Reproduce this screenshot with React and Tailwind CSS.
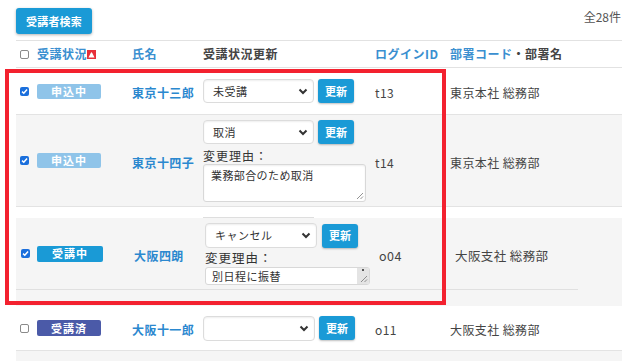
import React from "react";

const Check = ({ checked }) =>
  checked ? (
    <span className="flex h-[9px] w-[9px] items-center justify-center rounded-[2px] bg-[#1b6fdc]">
      <svg width="7" height="7" viewBox="0 0 8 8">
        <path d="M1.2 4.1 L3.2 6 L6.9 1.7" stroke="white" strokeWidth="1.7" fill="none" />
      </svg>
    </span>
  ) : (
    <span className="block h-[9px] w-[9px] rounded-[2px] border border-[#8a8a8a] bg-white" />
  );

const Chevron = () => (
  <svg width="10" height="7" viewBox="0 0 10 7">
    <path d="M1.5 1.5 L5 5 L8.5 1.5" stroke="#333" strokeWidth="2" fill="none" />
  </svg>
);

const Select = ({ value, wide }) => (
  <div
    className={
      "flex items-center justify-between rounded-[4px] border border-[#dcdcdc] bg-white pl-[9px] pr-[5px] shadow-[inset_0_1px_2px_rgba(0,0,0,0.07)] " +
      (wide ? "h-[25px] w-[112px]" : "h-[24px] w-[111px]")
    }
  >
    <span className="text-[11px] leading-none tracking-[0.5px] text-[#333]">{value}</span>
    <Chevron />
  </div>
);

const UpdateBtn = () => (
  <button className="flex h-[24px] w-[36px] items-center justify-center rounded-[3px] bg-[#1a9ad6] text-[11px] font-bold leading-none text-white shadow-[0_1px_2px_rgba(0,0,0,0.25)]">
    更新
  </button>
);

const Grip = () => (
  <svg width="8" height="8" viewBox="0 0 8 8" className="absolute bottom-[1px] right-[1px]">
    <path d="M7 1 L1 7 M7 4.5 L4.5 7" stroke="#777" strokeWidth="0.8" />
  </svg>
);

const Name = ({ children }) => (
  <span className="text-[12px] font-bold leading-none tracking-[0.45px] text-[#2b88cf]">{children}</span>
);

const Plain = ({ children }) => (
  <span className="text-[12px] leading-none tracking-[0.4px] text-[#444]">{children}</span>
);

export default function App() {
  return (
    <div className="relative h-[361px] w-[633px] overflow-hidden bg-white font-['Noto_Sans_CJK_JP','Noto_Sans',sans-serif] text-[#333]">
      {/* top bar */}
      <div className="flex items-start justify-between pl-4 pr-[12px] pt-2">
        <button className="flex h-[26px] w-[76px] items-center justify-center rounded-[3px] bg-[#1a9ad6] text-[11px] font-bold leading-none tracking-[0.2px] text-white shadow-[0_1px_3px_rgba(0,0,0,0.3)]">
          受講者検索
        </button>
        <span className="mt-[0px] text-[12px] leading-[18px] text-[#555]">全28件</span>
      </div>

      <div className="ml-4 mt-[6px] w-[606px]">
        {/* header */}
        <div className="flex h-[28px] items-center border-y border-[#e2e2e2] text-[12px] font-bold leading-none tracking-[0.5px]">
          <div className="w-[21px] pl-1">
            <Check checked={false} />
          </div>
          <div className="flex w-[95px] items-center text-[#3a8fd0]">
            受講状況
            <span className="flex h-[9px] w-[9px] items-end justify-center bg-[#e8303a]">
              <svg width="9" height="9" viewBox="0 0 9 9">
                <path d="M1.5 7.5 L3.5 3.5 L4.5 2 L5.5 3.5 L7.5 7.5 Z" fill="white" />
              </svg>
            </span>
          </div>
          <div className="w-[71px] text-[#3a8fd0]">氏名</div>
          <div className="w-[172px] text-[#444]">受講状況更新</div>
          <div className="w-[75px] text-[#3a8fd0]">ログインID</div>
          <div>
            <span className="text-[#3a8fd0]">部署コード</span>
            <span className="text-[#444]">・部署名</span>
          </div>
        </div>

        {/* row 1 */}
        <div className="flex h-[47px] items-center border-b border-[#e3e3e3] bg-white">
          <div className="w-[21px] pl-1">
            <Check checked />
          </div>
          <div className="w-[95px]">
            <span className="flex h-[15px] w-[64px] items-center justify-center rounded-[2px] bg-[#8fc4e9] text-[11px] font-bold leading-none tracking-[1px] text-white">
              申込中
            </span>
          </div>
          <div className="w-[71px]">
            <Name>東京十三郎</Name>
          </div>
          <div className="flex w-[172px] items-center gap-[4px]">
            <Select value="未受講" />
            <UpdateBtn />
          </div>
          <div className="w-[75px]">
            <Plain>t13</Plain>
          </div>
          <div>
            <Plain>東京本社 総務部</Plain>
          </div>
        </div>

        {/* row 2 */}
        <div className="flex items-center border-b border-[#e3e3e3] bg-[#f5f5f5]">
          <div className="w-[21px] pl-1">
            <Check checked />
          </div>
          <div className="w-[95px]">
            <span className="flex h-[15px] w-[64px] items-center justify-center rounded-[2px] bg-[#8fc4e9] text-[11px] font-bold leading-none tracking-[1px] text-white">
              申込中
            </span>
          </div>
          <div className="w-[71px]">
            <Name>東京十四子</Name>
          </div>
          <div className="flex w-[172px] flex-col pb-[4px] pt-[5px]">
            <div className="flex items-center gap-[4px]">
              <Select value="取消" />
              <UpdateBtn />
            </div>
            <div className="flex h-[20px] items-center pt-[3px] text-[12px] leading-none tracking-[1px] text-[#333]">
              変更理由：
            </div>
            <div className="relative h-[38px] w-[163px] rounded-[3px] border border-[#d8d8d8] bg-white pl-[7px] pt-[5px] text-[11px] leading-none tracking-[0.4px] text-[#333] shadow-[inset_0_1px_2px_rgba(0,0,0,0.07)]">
              業務部合のため取消
              <Grip />
            </div>
          </div>
          <div className="w-[75px]">
            <Plain>t14</Plain>
          </div>
          <div>
            <Plain>東京本社 総務部</Plain>
          </div>
        </div>

        {/* gap with stray select edge */}
        <div className="h-[11px] bg-white pl-[187px] pt-[10px]">
          <div className="h-px w-[111px] bg-[#dedede]" />
        </div>

        {/* row 3 (slightly offset render) */}
        <div className="bg-[#f5f5f5] pb-[16px]">
          <div className="flex w-[562px] items-center border-b border-[#e0e0e0]">
            <div className="w-[21px] pl-[5px]">
              <Check checked />
            </div>
            <div className="w-[97px]">
              <span className="flex h-[16px] w-[66px] items-center justify-center rounded-[2px] bg-[#1a9ad6] text-[11px] font-bold leading-none tracking-[1px] text-white">
                受講中
              </span>
            </div>
            <div className="w-[71px]">
              <Name>大阪四朗</Name>
            </div>
            <div className="flex w-[174px] flex-col pb-[4px] pt-[5px]">
              <div className="flex items-center gap-[5px]">
                <Select value="キャンセル" wide />
                <UpdateBtn />
              </div>
              <div className="flex h-[19px] items-center pt-[2px] text-[12.5px] leading-none tracking-[1px] text-[#333]">
                変更理由：
              </div>
              <div className="flex h-[18px] w-[165px] overflow-hidden rounded-[3px] border border-[#d8d8d8] bg-white">
                <div className="flex flex-1 items-center pl-[6px] text-[11px] leading-none tracking-[0.5px] text-[#333]">
                  別日程に振替
                </div>
                <div className="relative w-[12px] bg-[#e4e4e4]">
                  <span className="absolute left-[5px] top-[1px] h-[2px] w-[2px] bg-[#555]" />
                  <Grip />
                </div>
              </div>
            </div>
            <div className="w-[76px]">
              <span className="text-[12.5px] leading-none tracking-[0.5px] text-[#444]">o04</span>
            </div>
            <div>
              <span className="text-[12.5px] leading-none tracking-[0.4px] text-[#444]">大阪支社 総務部</span>
            </div>
          </div>
        </div>

        {/* row 4 */}
        <div className="flex h-[45px] items-center border-b border-[#e3e3e3] bg-white">
          <div className="w-[21px] pl-1">
            <Check checked={false} />
          </div>
          <div className="w-[95px]">
            <span className="flex h-[16px] w-[64px] items-center justify-center rounded-[2px] bg-[#4b5aa8] text-[11px] font-bold leading-none tracking-[1px] text-white">
              受講済
            </span>
          </div>
          <div className="w-[71px]">
            <Name>大阪十一郎</Name>
          </div>
          <div className="flex w-[172px] items-center gap-[4px]">
            <Select value="" wide />
            <UpdateBtn />
          </div>
          <div className="w-[75px]">
            <Plain>o11</Plain>
          </div>
          <div>
            <Plain>大阪支社 総務部</Plain>
          </div>
        </div>
        <div className="h-[20px] bg-[#f5f5f5]" />
      </div>

      {/* red annotation box */}
      <div className="pointer-events-none absolute left-[5px] top-[69px] h-[236px] w-[441px] border-4 border-[#f3212f]" />
    </div>
  );
}
